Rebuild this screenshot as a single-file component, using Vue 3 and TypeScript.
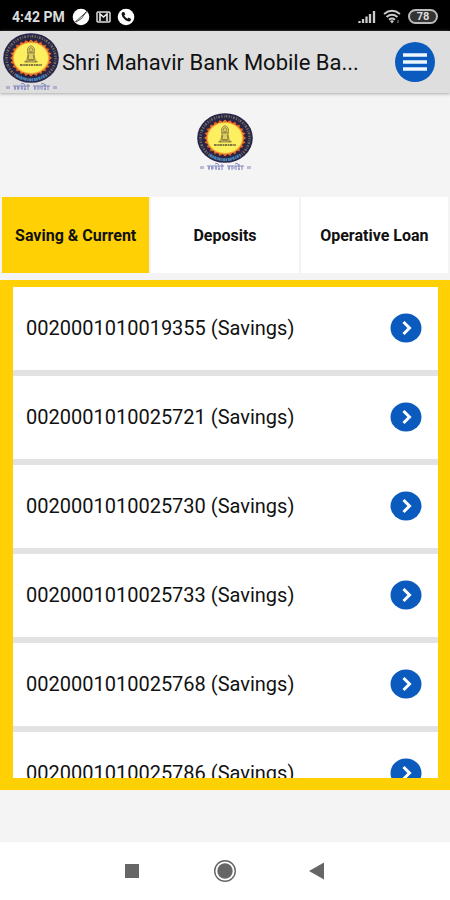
<script setup lang="ts">
import { ref, h } from 'vue'
import type { FunctionalComponent } from 'vue'

const tabs: string[] = ['Saving & Current', 'Deposits', 'Operative Loan']
const activeTab = ref<string>(tabs[0])

interface Account {
  number: string
  kind: string
}

const accounts: Account[] = [
  { number: '0020001010019355', kind: 'Savings' },
  { number: '0020001010025721', kind: 'Savings' },
  { number: '0020001010025730', kind: 'Savings' },
  { number: '0020001010025733', kind: 'Savings' },
  { number: '0020001010025768', kind: 'Savings' },
  { number: '0020001010025786', kind: 'Savings' },
]

// Sunburst outline between the dark ring and the yellow centre
const rays: string = Array.from({ length: 48 }, (_, i) => {
  const angle = (i * Math.PI) / 24
  const reach = i % 2 === 0 ? 1 : 0.88
  return `${(28 + Math.cos(angle) * 21.5 * reach).toFixed(2)},${(25 + Math.sin(angle) * 19 * reach).toFixed(2)}`
}).join(' ')

const BankLogo: FunctionalComponent = () =>
  h('svg', { viewBox: '0 0 56 59', width: 56, height: 59, 'aria-hidden': 'true' }, [
    h('ellipse', { cx: 28, cy: 25, rx: 27.8, ry: 24.8, fill: '#28254a' }),
    h('ellipse', { cx: 28, cy: 25, rx: 24.6, ry: 21.8, fill: 'none', stroke: '#77745c', 'stroke-width': 2.6, 'stroke-dasharray': '1.2 1.4 0.7 1.1 1.6 1.5' }),
    h('path', { d: 'M13 42Q28 51.5 43 42', fill: 'none', stroke: '#3d86c4', 'stroke-width': 3, 'stroke-dasharray': '2 0.8 1.2 0.7' }),
    h('polygon', { points: rays, fill: '#e5702a', stroke: '#3d2030', 'stroke-width': 0.8 }),
    h('ellipse', { cx: 28, cy: 25, rx: 18, ry: 15.8, fill: '#f8b63c' }),
    h('ellipse', { cx: 28, cy: 25, rx: 17, ry: 14.9, fill: '#fcf060' }),
    h('g', { fill: '#ddcf5c', stroke: '#81723f', 'stroke-width': 0.8 }, [
      h('path', { d: 'M24.6 20V15.5Q28 10 31.4 15.5V20Z', fill: '#e8dc62' }),
      h('circle', { cx: 28, cy: 16.8, r: 2 }),
      h('path', { d: 'M25.2 20H30.8L32 26.5L34.5 29H21.5L24 26.5Z' }),
      h('path', { d: 'M25.8 22L24.8 26.6H31.2L30.2 22M23 29Q28 25.6 33 29', fill: 'none' }),
    ]),
    h('path', { d: 'M17 32H39', stroke: '#594d32', 'stroke-width': 1.6, 'stroke-dasharray': '2.6 0.7 1.5 0.5' }),
    h('g', { fill: 'none', stroke: '#7478b8', 'stroke-width': 0.9 }, [
      h('path', { d: 'M4 53v3M6 53v3M51 53v3M53 53v3' }),
      h('path', { d: 'M10 53H27M30 53H47' }),
      h('path', { d: 'M12 53v4M11 55h2M15 53v4M14 55h3M19 53v4M18 55h2M22 53v4M21 56h2M25 51v6M32 53v4M31 55h2M35 53v4M36 55h2M39 53v4M42 51v6M41 56h2M45 53v4M18 51q2-2 4 1M38 51q2-2 4 1' }),
    ]),
  ])
</script>

<template>
  <div class="screen">
    <div class="status">
      <span class="clock">4:42 PM</span>
      <svg viewBox="0 0 18 18" width="18" height="18" aria-hidden="true">
        <circle cx="9" cy="9" r="8.300" fill="#fff" />
        <path d="M1.500 15.500L16 2.500M4 14Q10 12 14 4" fill="none" stroke="#222" stroke-width="0.800" />
      </svg>
      <svg class="mail" viewBox="0 0 15 12" width="15" height="12" aria-hidden="true">
        <rect x="1" y="1" width="13" height="10" rx="1" fill="#111" stroke="#ddd" stroke-width="1.500" />
        <path d="M4 10V3L7.500 6L11 3V10" fill="none" stroke="#eee" stroke-width="1.600" />
      </svg>
      <svg viewBox="0 0 18 18" width="18" height="18" aria-hidden="true">
        <circle cx="9" cy="9" r="8.300" fill="#fff" />
        <path d="M5.200 4.300L7.200 3.900L8.300 6.400L7.200 7.600Q8 9.700 10.500 10.800L11.700 9.600L14 10.900L13.500 13Q11.500 14.300 8.300 12Q4.700 9.200 4.500 6Z" fill="#111" />
      </svg>
      <span class="spacer"></span>
      <svg viewBox="0 0 18 14" width="18" height="14" aria-hidden="true">
        <path d="M1.500 13V11M5 13V9M8.500 13V6.500M12 13V4M16 13V1" stroke="#ccc" stroke-width="2.300" />
      </svg>
      <svg class="wifi" viewBox="0 0 18 15" width="18" height="15" aria-hidden="true">
        <path d="M1 5Q9-1.500 17 5M3.500 8Q9 3.500 14.500 8M6 10.800Q9 8.300 12 10.800" fill="none" stroke="#ccc" stroke-width="1.800" />
        <path d="M7 12L9 14.500L11 12Q9 10.500 7 12Z" fill="#ccc" />
        <path d="M15 11V14" stroke="#888" />
      </svg>
      <span class="battery">78</span>
    </div>

    <header class="header">
      <BankLogo />
      <h1 class="title">Shri Mahavir Bank Mobile Ba...</h1>
      <button type="button" aria-label="Menu">
        <svg viewBox="0 0 40 40" width="40" height="40" aria-hidden="true">
          <circle cx="20" cy="20" r="20" fill="#0a5bbd" />
          <path d="M8 13H32M8 20H32M8 27H32" stroke="#eef7ff" stroke-width="3.400" />
        </svg>
      </button>
    </header>

    <main class="content">
      <div class="brand"><BankLogo /></div>

      <nav class="tabs">
        <button
          v-for="tab in tabs"
          :key="tab"
          type="button"
          class="tab"
          :class="{ active: tab === activeTab }"
          @click="activeTab = tab"
        >{{ tab }}</button>
      </nav>

      <section class="panel">
        <ul class="accounts">
          <li v-for="account in accounts" :key="account.number" class="account">
            <span>{{ account.number }} ({{ account.kind }})</span>
            <button type="button" aria-label="Open account">
              <svg viewBox="0 0 32 30" width="32" height="30" aria-hidden="true">
                <ellipse cx="16" cy="15" rx="15.500" ry="14.500" fill="#0a5bbd" />
                <path d="M13.500 9L19.500 15L13.500 21" fill="none" stroke="#fff" stroke-width="3" />
              </svg>
            </button>
          </li>
        </ul>
      </section>
    </main>

    <nav class="system">
      <button type="button" aria-label="Recent apps">
        <svg viewBox="0 0 24 24" width="24" height="24" aria-hidden="true"><rect x="4" y="5" width="14" height="14" fill="#666" /></svg>
      </button>
      <button type="button" aria-label="Home">
        <svg viewBox="0 0 24 24" width="24" height="24" aria-hidden="true">
          <circle cx="12" cy="12" r="10.300" fill="none" stroke="#666" stroke-width="1.400" />
          <circle cx="12" cy="12" r="7.700" fill="#666" />
        </svg>
      </button>
      <button type="button" aria-label="Back">
        <svg viewBox="0 0 24 24" width="24" height="24" aria-hidden="true"><path d="M4 12L19 3.500V20.500Z" fill="#666" /></svg>
      </button>
    </nav>
  </div>
</template>

<style>
body {
  margin: 0;
}
</style>

<style scoped>
.screen {
  display: flex;
  flex-direction: column;
  height: 100vh;
  overflow: hidden;
  background: #f4f4f4;
  color: #111;
  font-family: Roboto, "Liberation Sans", sans-serif;
}

svg {
  display: block;
  flex: none;
}

button {
  margin: 0;
  padding: 0;
  border: 0;
  background: none;
  color: inherit;
  font: inherit;
  cursor: pointer;
}

.status {
  display: flex;
  flex: none;
  align-items: center;
  box-sizing: border-box;
  height: 31px;
  padding: 2px 12px 0;
  background: #000;
  color: #ddd;
}

.clock {
  margin-right: 7px;
  font-size: 14px;
  font-weight: 700;
}

.mail {
  margin: 0 6px;
}

.spacer {
  flex: 1;
}

.wifi {
  margin: 0 7px;
}

.battery {
  box-sizing: border-box;
  width: 30px;
  height: 15px;
  border: 2px solid #bbb;
  border-radius: 8px;
  background: #333;
  font-size: 11px;
  font-weight: 700;
  line-height: 11px;
  text-align: center;
}

.header {
  display: flex;
  flex: none;
  align-items: center;
  box-sizing: border-box;
  height: 62px;
  padding: 0 15px 0 3px;
  background: #dedede;
  box-shadow: 0 1px 3px #aaa;
}

.title {
  flex: 1;
  min-width: 0;
  margin: 0 0 0 3px;
  overflow: hidden;
  font-size: 22px;
  font-weight: 400;
  white-space: nowrap;
}

.content {
  display: flex;
  flex: 1;
  flex-direction: column;
  min-height: 0;
  padding-bottom: 52px;
}

.brand {
  display: flex;
  flex: none;
  justify-content: center;
  padding: 20px 0 25px;
}

.tabs {
  display: grid;
  flex: none;
  grid-template-columns: repeat(3, 1fr);
  gap: 2px;
  height: 76px;
  padding: 0 2px 7px;
}

.tab {
  background: #fff;
  font-size: 16px;
  font-weight: 700;
  white-space: nowrap;
}

.tab.active {
  background: #ffd004;
}

.panel {
  display: flex;
  flex: 1;
  min-height: 0;
  padding: 7px 12px 12px 13px;
  background: #ffd004;
}

.accounts {
  flex: 1;
  margin: 0;
  padding: 0;
  overflow: hidden;
  background: #fff;
  list-style: none;
}

.account {
  display: flex;
  align-items: center;
  justify-content: space-between;
  box-sizing: border-box;
  height: 89px;
  padding: 0 16px 2px 13px;
  border-bottom: 6px solid #e2e2e2;
  font-size: 20px;
}

.system {
  display: flex;
  flex: none;
  align-items: center;
  justify-content: center;
  gap: 68px;
  height: 58px;
  background: #fff;
}
</style>
